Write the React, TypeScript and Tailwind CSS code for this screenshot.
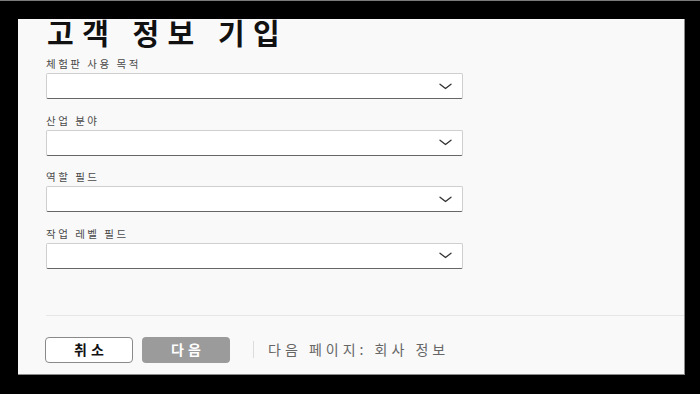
import React from "react";

const fields = ["체험판 사용 목적", "산업 분야", "역할 필드", "작업 레벨 필드"];

function Chevron() {
  return (
    <svg width="13" height="7" viewBox="0 0 13 7" fill="none">
      <path d="M1 1.2 L6.5 5.6 L12 1.2" stroke="#333" strokeWidth="1.3" strokeLinecap="round" strokeLinejoin="round" />
    </svg>
  );
}

export default function App() {
  return (
    <div
      className="w-[700px] h-[394px] bg-black border-t border-[#7a7a7a] overflow-hidden"
      style={{ fontFamily: '"Noto Sans CJK KR", "Noto Sans", sans-serif' }}
    >
      <div className="ml-[18px] mt-[18px] w-[667px] h-[356px] bg-[#f9f9f9] border-r border-b border-[#8a8a8a] flex flex-col">
        <h1 className="pl-[29px] text-[29px] leading-[27px] font-bold tracking-[8.5px] text-[#111]">
          고객 정보 기입
        </h1>
        <div className="pl-[28px] mt-[11px] flex flex-col gap-[14.5px]">
          {fields.map((f) => (
            <div key={f} className="flex flex-col">
              <div className="text-[10.5px] leading-[14px] tracking-[2.5px] text-[#4a4a4a] mb-[2px]">{f}</div>
              <div className="w-[417px] h-[26px] bg-white border border-[#cfcfcf] border-b-[#666] rounded-[2px] flex items-center justify-end pr-[10px]">
                <Chevron />
              </div>
            </div>
          ))}
        </div>
        <div className="ml-[28px] mt-[46px] h-px bg-[#e6e6e6]" />
        <div className="pl-[27px] mt-[21px] flex items-center">
          <button className="w-[88px] h-[26px] bg-white border border-[#8a8a8a] rounded-[4px] text-[14px] font-bold tracking-[4px] text-[#111] flex items-center justify-center pl-[4px]">
            취소
          </button>
          <button className="ml-[9px] w-[88px] h-[26px] bg-[#9b9b9b] rounded-[4px] text-[14px] font-bold tracking-[4px] text-white flex items-center justify-center pl-[4px]">
            다음
          </button>
          <div className="ml-[23px] w-px h-[17px] bg-[#dcdcdc]" />
          <div className="ml-[14px] text-[14px] tracking-[4px] text-[#666]">다음 페이지: 회사 정보</div>
        </div>
      </div>
    </div>
  );
}
